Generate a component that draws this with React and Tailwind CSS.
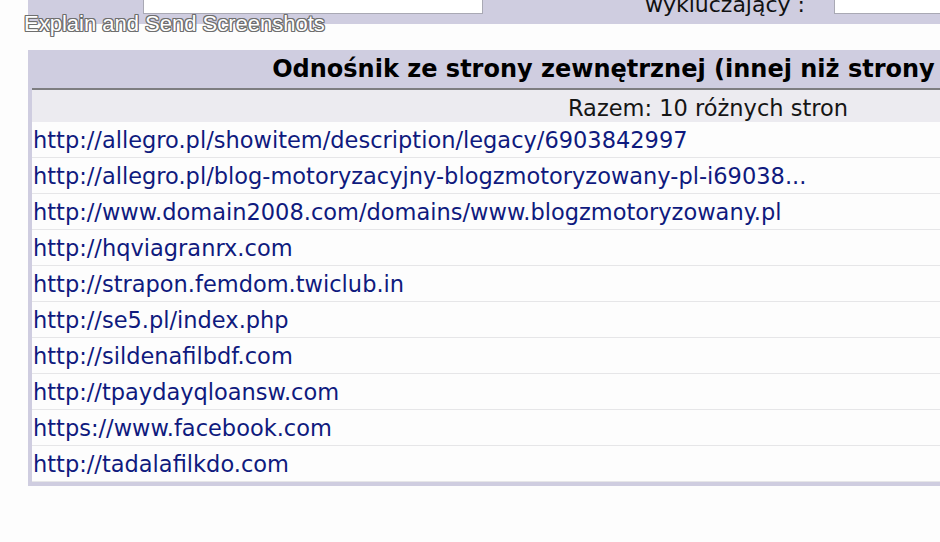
import React from "react";

const links = [
  "http://allegro.pl/showitem/description/legacy/6903842997",
  "http://allegro.pl/blog-motoryzacyjny-blogzmotoryzowany-pl-i69038...",
  "http://www.domain2008.com/domains/www.blogzmotoryzowany.pl",
  "http://hqviagranrx.com",
  "http://strapon.femdom.twiclub.in",
  "http://se5.pl/index.php",
  "http://sildenafilbdf.com",
  "http://tpaydayqloansw.com",
  "https://www.facebook.com",
  "http://tadalafilkdo.com",
];

const verdana = { fontFamily: "Verdana, 'DejaVu Sans', sans-serif" };

export default function App() {
  return (
    <div className="relative w-[940px] h-[542px] overflow-hidden bg-[#fdfdfd]" style={verdana}>
      {/* filter band */}
      <div className="ml-[28px] w-[1360px] h-[24px] bg-[#cfcde0] flex items-start">
        <div className="ml-[115px] w-[340px] h-[14px] bg-white border border-t-0 border-[#a9a9b4]" />
        <div className="w-[322px] h-[24px] flex justify-end items-start">
          <span className="text-[22px] leading-[22px] mt-[-6px] text-[#111]">wykluczający :</span>
        </div>
        <div className="ml-[29px] w-[200px] h-[14px] bg-white border border-t-0 border-[#a9a9b4]" />
      </div>

      {/* table */}
      <div className="ml-[28px] mt-[26px] w-[1360px] bg-[#cfcde0] px-[4px] pb-[4px]">
        <div className="h-[40px] flex items-center justify-center border-b-2 border-[#7d7d80]">
          <span className="text-[24px] font-bold text-black whitespace-nowrap">
            Odnośnik ze strony zewnętrznej (innej niż strony wyszukiwarek)
          </span>
        </div>
        <div className="h-[32px] bg-[#ecebf0] flex items-center justify-center pt-[3px]">
          <span className="text-[22.5px] leading-[28px] text-[#151515]">Razem: 10 różnych stron</span>
        </div>
        {links.map((l, i) => (
          <div
            key={i}
            className="h-[36px] bg-[#fdfdfd] border-b border-[#e6e6e8] flex items-center pl-[1px] pt-[1px]"
          >
            <span className="text-[22.5px] leading-[28px] text-[#0f1a7e] whitespace-nowrap">{l}</span>
          </div>
        ))}
      </div>

      {/* watermark */}
      <div
        className="absolute left-[24px] top-[7px] text-[22px] text-white whitespace-nowrap"
        style={{
          fontFamily: "'Liberation Sans', Arial, sans-serif",
          textShadow:
            "1px 0 0 #6e6e6e, -1px 0 0 #6e6e6e, 0 1px 0 #6e6e6e, 0 -1px 0 #6e6e6e, 1px 1px 0 #6e6e6e, -1px -1px 0 #6e6e6e, 1px -1px 0 #6e6e6e, -1px 1px 0 #6e6e6e",
        }}
      >
        Explain and Send Screenshots
      </div>
    </div>
  );
}
